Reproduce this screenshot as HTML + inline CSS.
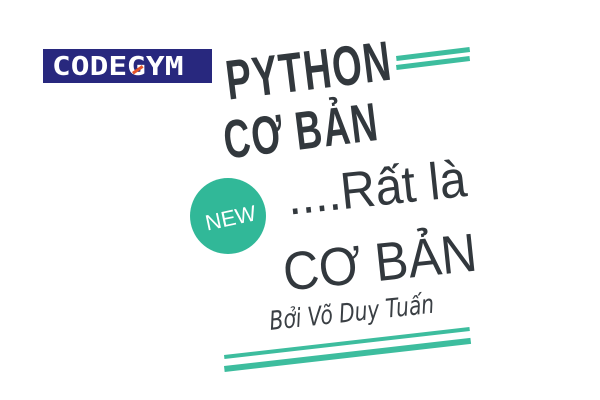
<!DOCTYPE html>
<html><head><meta charset="utf-8"><style>
body{margin:0;width:600px;height:400px;background:#fff;overflow:hidden;position:relative;font-family:"Liberation Sans","DejaVu Sans",sans-serif;color:#32383d}
.a{position:absolute;white-space:nowrap;transform-origin:0 0}
</style></head><body>
<div class="a" style="left:43px;top:49px;width:169px;height:34px;background:#28287e"></div>
<div class="a" style="left:52px;top:52px;font:bold 26px 'DejaVu Sans Mono','Liberation Mono',monospace;color:#fff;transform:scaleX(1.2)">CODEGYM</div>
<div class="a" style="left:132px;top:72px;width:12px;height:3px;background:#e5542a;transform:rotate(-35deg)"></div>

<div class="a" style="left:222px;top:48px;font:bold 56px 'Liberation Sans',sans-serif;transform:rotate(-7deg) scaleX(0.68);letter-spacing:2px">PYTHON</div>
<div class="a" style="left:396px;top:56px;width:74px;height:5px;background:#3dbd9e;transform:rotate(-7deg)"></div>
<div class="a" style="left:396px;top:65px;width:74px;height:5px;background:#3dbd9e;transform:rotate(-7deg)"></div>

<div class="a" style="left:220px;top:110px;font:bold 54px 'Liberation Sans',sans-serif;transform:rotate(-7deg) scaleX(0.68);letter-spacing:2px">CƠ BẢN</div>

<div class="a" style="left:190px;top:178px;width:76px;height:76px;border-radius:50%;background:#31b898"></div>
<div class="a" style="left:203px;top:211px;font:22px 'Liberation Sans',sans-serif;color:#fff;transform:rotate(-12deg)">NEW</div>

<div class="a" style="left:284px;top:168px;font:52px 'Liberation Sans',sans-serif;transform:rotate(-6deg) scaleX(0.93)">....Rất là</div>
<div class="a" style="left:280px;top:242px;font:54px 'Liberation Sans',sans-serif;transform:rotate(-6deg) scaleX(0.92)">CƠ BẢN</div>
<div class="a" style="left:268px;top:307px;font:italic 26px 'DejaVu Sans',sans-serif;font-weight:200;color:#3a3f44;transform:rotate(-6deg) scaleX(0.78)">Bởi Võ Duy Tuấn</div>

<div class="a" style="left:224px;top:355px;width:247px;height:4px;background:#3dbd9e;transform:rotate(-6.5deg)"></div>
<div class="a" style="left:224px;top:366px;width:248px;height:6px;background:#3dbd9e;transform:rotate(-6.5deg)"></div>
</body></html>
